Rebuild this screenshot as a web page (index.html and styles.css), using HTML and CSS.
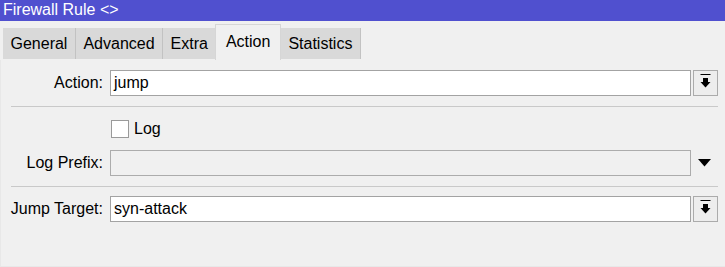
FILE: index.html
```html
<!DOCTYPE html>
<html>
<head>
<meta charset="utf-8">
<link rel="stylesheet" href="styles.css">
</head>
<body>
<div class="window">
  <div class="titlebar">Firewall Rule &lt;&gt;</div>
  <div class="tabs">
    <div class="tab">General</div>
    <div class="tab">Advanced</div>
    <div class="tab">Extra</div>
    <div class="tab active">Action</div>
    <div class="tab">Statistics</div>
  </div>
  <div class="panel">
    <div class="row">
      <div class="label">Action:</div>
      <div class="field">jump</div>
      <div class="btn">
        <svg width="23" height="24" viewBox="0 0 23 24"><rect x="6.5" y="3" width="10" height="1" fill="#000"/><rect x="9" y="7" width="5" height="5" fill="#000"/><polygon points="6.5,11 16.5,11 11.5,16.5" fill="#000"/></svg>
      </div>
    </div>
    <div class="sep"></div>
    <div class="row check-row">
      <div class="label"></div>
      <div class="checkbox"></div>
      <div class="check-text">Log</div>
    </div>
    <div class="row prefix-row">
      <div class="label">Log Prefix:</div>
      <div class="field disabled"></div>
      <div class="arrow">
        <svg width="25" height="26" viewBox="0 0 25 26"><polygon points="5,9 18,9 11.5,16.5" fill="#000"/></svg>
      </div>
    </div>
    <div class="sep sep2"></div>
    <div class="row jump-row">
      <div class="label">Jump Target:</div>
      <div class="field">syn-attack</div>
      <div class="btn">
        <svg width="23" height="24" viewBox="0 0 23 24"><rect x="6.5" y="3" width="10" height="1" fill="#000"/><rect x="9" y="7" width="5" height="5" fill="#000"/><polygon points="6.5,11 16.5,11 11.5,16.5" fill="#000"/></svg>
      </div>
    </div>
  </div>
</div>
</body>
</html>
```

FILE: styles.css
```css
html, body {
  margin: 0;
  padding: 0;
}
body {
  width: 725px;
  height: 267px;
  overflow: hidden;
  background: #e8e8e8;
  font-family: "Liberation Sans", Arial, sans-serif;
  font-size: 16px;
  color: #000;
}
.window {
  display: flex;
  flex-direction: column;
  height: 267px;
}
.titlebar {
  height: 21px;
  line-height: 20px;
  background: #5050cf;
  color: #fff;
  padding-left: 3px;
  white-space: nowrap;
}
.tabs {
  display: flex;
  align-items: flex-end;
  height: 39px;
  padding-left: 3px;
  background: #f0f0f0;
  box-sizing: border-box;
}
.tab {
  height: 31px;
  line-height: 31px;
  background: #d9d9d9;
  border-right: 1px solid #c2c2c2;
  padding: 0 7.5px;
  margin-bottom: 1px;
  color: #000;
  white-space: nowrap;
}
.tab.active {
  height: 35px;
  line-height: 34px;
  background: #f0f0f0;
  border: 1px solid #d6d6d6;
  border-bottom: none;
  margin-bottom: 0;
  padding: 0 9.5px;
  margin-left: -1px;
}
.panel {
  flex: 1;
  margin-left: 1px;
  margin-bottom: 1px;
  background: #f0f0f0;
  padding: 10px 7px 0 0;
}
.row {
  display: flex;
  align-items: center;
  height: 26px;
}
.label {
  width: 102px;
  margin-right: 7px;
  text-align: right;
  white-space: nowrap;
  flex: none;
}
.field {
  flex: 1;
  height: 26px;
  box-sizing: border-box;
  border: 1px solid #a3a3a3;
  background: #fff;
  padding-left: 3px;
  line-height: 24px;
}
.field.disabled {
  background: #f0f0f0;
  border-color: #acacac;
}
.btn {
  width: 25px;
  height: 26px;
  box-sizing: border-box;
  margin-left: 2px;
  border: 1px solid #ababab;
  background: #ededed;
  flex: none;
}
.btn svg, .arrow svg {
  display: block;
}
.arrow {
  width: 25px;
  height: 26px;
  margin-left: 2px;
  flex: none;
}
.sep {
  height: 1px;
  background: #c9c9c9;
  margin: 10px 0 0 10px;
}
.check-row {
  height: 18px;
  margin-top: 13px;
}
.checkbox {
  width: 18px;
  height: 18px;
  box-sizing: border-box;
  border: 1px solid #9a9a9a;
  background: #fff;
  margin-left: 1px;
  flex: none;
}
.check-text {
  margin-left: 5px;
}
.prefix-row {
  margin-top: 12px;
}
.jump-row {
  margin-top: 9px;
}
```
